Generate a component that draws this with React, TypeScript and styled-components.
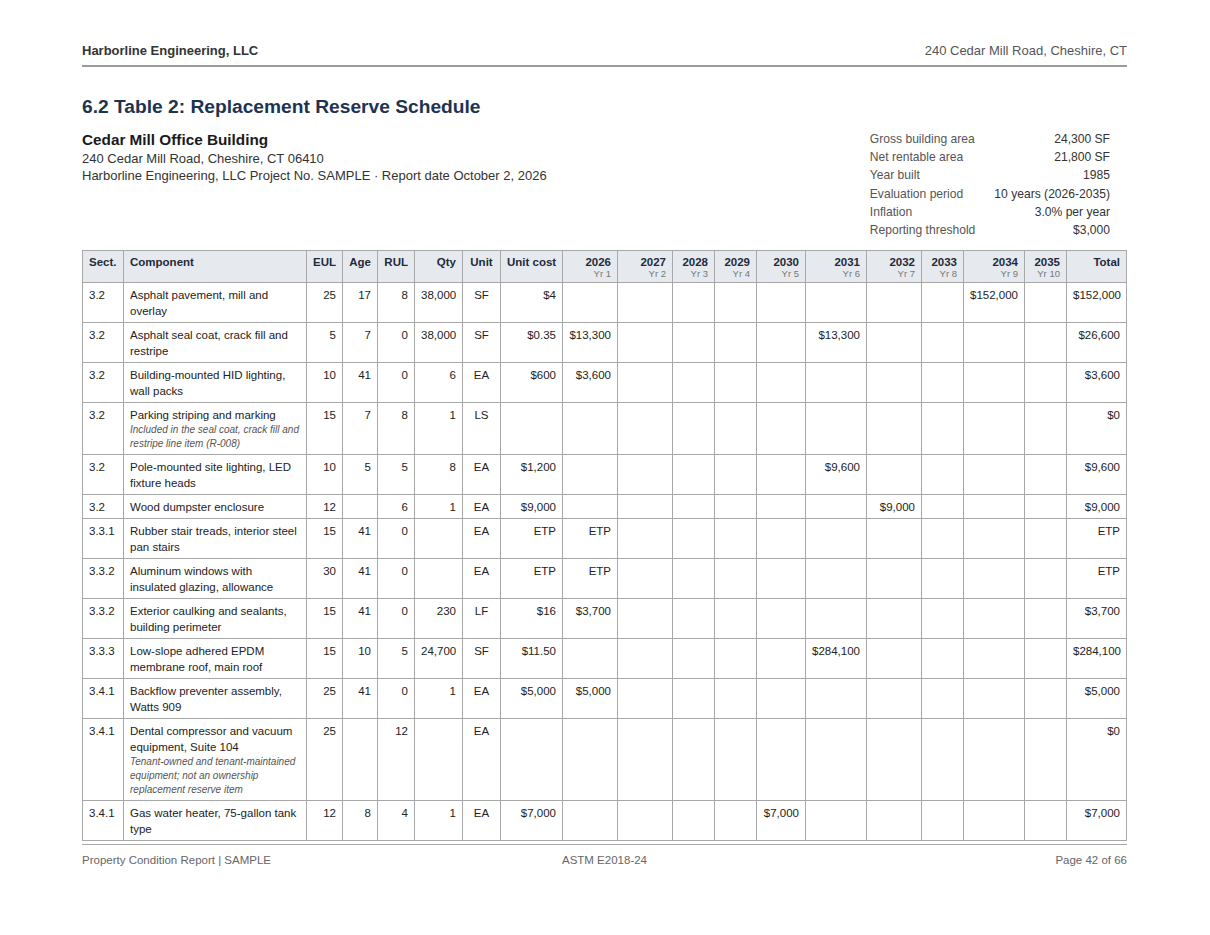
import React from "react";
import styled, { createGlobalStyle } from "styled-components";

const GlobalStyle = createGlobalStyle`
  html, body { margin: 0; padding: 0; background: #ffffff; }
  body { font-family: "Liberation Sans", Arial, sans-serif; color: #222; }
`;

const Page = styled.div`
  width: 1045px;
  margin-left: 82px;
  padding-top: 43px;
`;

const Header = styled.header`
  display: flex;
  justify-content: space-between;
  align-items: baseline;
  font-size: 13px;
  line-height: 16px;
  padding-bottom: 6px;
  border-bottom: 2px solid #9a9a9a;
`;

const Firm = styled.span`
  font-weight: bold;
  color: #333;
`;

const HeaderAddr = styled.span`
  color: #555;
`;

const Title = styled.h1`
  margin: 28px 0 0;
  font-size: 19.2px;
  line-height: 24px;
  font-weight: bold;
  color: #1d3352;
`;

const InfoRow = styled.section`
  display: flex;
  justify-content: space-between;
  align-items: flex-start;
  margin-top: 10px;
`;

const Building = styled.div`
  display: flex;
  flex-direction: column;
  padding-top: 1px;
`;

const BuildingName = styled.div`
  font-size: 15.3px;
  line-height: 20px;
  font-weight: bold;
  color: #1a1a1a;
`;

const BuildingLine = styled.div`
  font-size: 13px;
  line-height: 17px;
  color: #333;
`;

const Facts = styled.dl`
  display: grid;
  grid-template-columns: auto auto;
  column-gap: 19px;
  margin: 0 17px 0 0;
  padding-top: 1px;
  font-size: 12.1px;
  line-height: 18.2px;
  color: #444;
`;

const FactLabel = styled.dt`
  margin: 0;
  color: #555;
`;

const FactValue = styled.dd`
  margin: 0;
  text-align: right;
  color: #333;
`;

const Table = styled.table`
  margin-top: 11px;
  width: 1045px;
  border-collapse: collapse;
  table-layout: fixed;
  font-size: 11.5px;
  line-height: 16px;
  border: 1px solid #a8a8a8;
`;

type Align = "left" | "right" | "center";

const Th = styled.th<{ $align: Align }>`
  background: #e6eaef;
  border: 1px solid #a8a8a8;
  padding: 5px 6px 3px 6px;
  vertical-align: top;
  text-align: ${(p) => p.$align};
  white-space: nowrap;
  font-weight: bold;
  color: #1f2b3a;
  font-size: 11.5px;
  line-height: 13px;
`;

const YearSub = styled.div`
  font-weight: normal;
  font-size: 9.5px;
  line-height: 10px;
  color: #777;
`;

const Td = styled.td<{ $align: Align }>`
  border: 1px solid #a8a8a8;
  padding: 4px 6px 3px 6px;
  vertical-align: top;
  text-align: ${(p) => p.$align};
  color: #222;
`;

const Note = styled.div`
  font-size: 10px;
  line-height: 14px;
  font-style: italic;
  color: #555;
`;

const Footer = styled.footer`
  margin-top: 3px;
  border-top: 1px solid #a8a8a8;
  display: grid;
  grid-template-columns: 1fr auto 1fr;
  padding-top: 8px;
  font-size: 11.5px;
  line-height: 14px;
  color: #666;
`;

const FootLeft = styled.span``;
const FootCenter = styled.span`
  text-align: center;
`;
const FootRight = styled.span`
  text-align: right;
`;

const colWidths = [41, 183, 36, 35, 37, 48, 38, 62, 55, 55, 42, 42, 49, 61, 55, 42, 61, 42, 60];

const years = [2026, 2027, 2028, 2029, 2030, 2031, 2032, 2033, 2034, 2035];

type Row = {
  sect: string;
  comp: string;
  note?: string;
  eul: string;
  age: string;
  rul: string;
  qty: string;
  unit: string;
  cost: string;
  yrs: Record<number, string>;
  total: string;
};

const rows: Row[] = [
  { sect: "3.2", comp: "Asphalt pavement, mill and overlay", eul: "25", age: "17", rul: "8", qty: "38,000", unit: "SF", cost: "$4", yrs: { 8: "$152,000" }, total: "$152,000" },
  { sect: "3.2", comp: "Asphalt seal coat, crack fill and restripe", eul: "5", age: "7", rul: "0", qty: "38,000", unit: "SF", cost: "$0.35", yrs: { 0: "$13,300", 5: "$13,300" }, total: "$26,600" },
  { sect: "3.2", comp: "Building-mounted HID lighting, wall packs", eul: "10", age: "41", rul: "0", qty: "6", unit: "EA", cost: "$600", yrs: { 0: "$3,600" }, total: "$3,600" },
  { sect: "3.2", comp: "Parking striping and marking", note: "Included in the seal coat, crack fill and restripe line item (R-008)", eul: "15", age: "7", rul: "8", qty: "1", unit: "LS", cost: "", yrs: {}, total: "$0" },
  { sect: "3.2", comp: "Pole-mounted site lighting, LED fixture heads", eul: "10", age: "5", rul: "5", qty: "8", unit: "EA", cost: "$1,200", yrs: { 5: "$9,600" }, total: "$9,600" },
  { sect: "3.2", comp: "Wood dumpster enclosure", eul: "12", age: "", rul: "6", qty: "1", unit: "EA", cost: "$9,000", yrs: { 6: "$9,000" }, total: "$9,000" },
  { sect: "3.3.1", comp: "Rubber stair treads, interior steel pan stairs", eul: "15", age: "41", rul: "0", qty: "", unit: "EA", cost: "ETP", yrs: { 0: "ETP" }, total: "ETP" },
  { sect: "3.3.2", comp: "Aluminum windows with insulated glazing, allowance", eul: "30", age: "41", rul: "0", qty: "", unit: "EA", cost: "ETP", yrs: { 0: "ETP" }, total: "ETP" },
  { sect: "3.3.2", comp: "Exterior caulking and sealants, building perimeter", eul: "15", age: "41", rul: "0", qty: "230", unit: "LF", cost: "$16", yrs: { 0: "$3,700" }, total: "$3,700" },
  { sect: "3.3.3", comp: "Low-slope adhered EPDM membrane roof, main roof", eul: "15", age: "10", rul: "5", qty: "24,700", unit: "SF", cost: "$11.50", yrs: { 5: "$284,100" }, total: "$284,100" },
  { sect: "3.4.1", comp: "Backflow preventer assembly, Watts 909", eul: "25", age: "41", rul: "0", qty: "1", unit: "EA", cost: "$5,000", yrs: { 0: "$5,000" }, total: "$5,000" },
  { sect: "3.4.1", comp: "Dental compressor and vacuum equipment, Suite 104", note: "Tenant-owned and tenant-maintained equipment; not an ownership replacement reserve item", eul: "25", age: "", rul: "12", qty: "", unit: "EA", cost: "", yrs: {}, total: "$0" },
  { sect: "3.4.1", comp: "Gas water heater, 75-gallon tank type", eul: "12", age: "8", rul: "4", qty: "1", unit: "EA", cost: "$7,000", yrs: { 4: "$7,000" }, total: "$7,000" },
];

const facts: [string, string][] = [
  ["Gross building area", "24,300 SF"],
  ["Net rentable area", "21,800 SF"],
  ["Year built", "1985"],
  ["Evaluation period", "10 years (2026-2035)"],
  ["Inflation", "3.0% per year"],
  ["Reporting threshold", "$3,000"],
];

export default function App() {
  return (
    <>
      <GlobalStyle />
      <Page>
        <Header>
          <Firm>Harborline Engineering, LLC</Firm>
          <HeaderAddr>240 Cedar Mill Road, Cheshire, CT</HeaderAddr>
        </Header>
        <Title>6.2 Table 2: Replacement Reserve Schedule</Title>
        <InfoRow>
          <Building>
            <BuildingName>Cedar Mill Office Building</BuildingName>
            <BuildingLine>240 Cedar Mill Road, Cheshire, CT 06410</BuildingLine>
            <BuildingLine>Harborline Engineering, LLC Project No. SAMPLE · Report date October 2, 2026</BuildingLine>
          </Building>
          <Facts>
            {facts.map(([k, v]) => (
              <React.Fragment key={k}>
                <FactLabel>{k}</FactLabel>
                <FactValue>{v}</FactValue>
              </React.Fragment>
            ))}
          </Facts>
        </InfoRow>
        <Table>
          <colgroup>
            {colWidths.map((w, i) => (
              <col key={i} style={{ width: w }} />
            ))}
          </colgroup>
          <thead>
            <tr>
              <Th $align="left">Sect.</Th>
              <Th $align="left">Component</Th>
              <Th $align="right">EUL</Th>
              <Th $align="right">Age</Th>
              <Th $align="right">RUL</Th>
              <Th $align="right">Qty</Th>
              <Th $align="center">Unit</Th>
              <Th $align="right">Unit cost</Th>
              {years.map((y, i) => (
                <Th key={y} $align="right">
                  {y}
                  <YearSub>Yr {i + 1}</YearSub>
                </Th>
              ))}
              <Th $align="right">Total</Th>
            </tr>
          </thead>
          <tbody>
            {rows.map((r, idx) => (
              <tr key={idx}>
                <Td $align="left">{r.sect}</Td>
                <Td $align="left">
                  {r.comp}
                  {r.note && <Note>{r.note}</Note>}
                </Td>
                <Td $align="right">{r.eul}</Td>
                <Td $align="right">{r.age}</Td>
                <Td $align="right">{r.rul}</Td>
                <Td $align="right">{r.qty}</Td>
                <Td $align="center">{r.unit}</Td>
                <Td $align="right">{r.cost}</Td>
                {years.map((y, i) => (
                  <Td key={y} $align="right">{r.yrs[i] ?? ""}</Td>
                ))}
                <Td $align="right">{r.total}</Td>
              </tr>
            ))}
          </tbody>
        </Table>
        <Footer>
          <FootLeft>Property Condition Report | SAMPLE</FootLeft>
          <FootCenter>ASTM E2018-24</FootCenter>
          <FootRight>Page 42 of 66</FootRight>
        </Footer>
      </Page>
    </>
  );
}
